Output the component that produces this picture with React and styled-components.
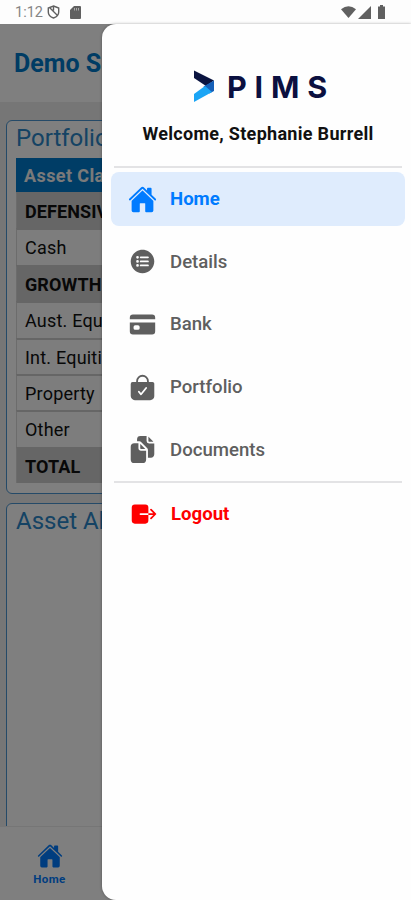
import React from "react";
import styled, { createGlobalStyle } from "styled-components";
import {
  IoHome,
  IoListCircle,
  IoCard,
  IoBagCheck,
  IoDocuments,
  IoExit,
} from "react-icons/io5";

const GlobalStyle = createGlobalStyle`
  * {
    box-sizing: border-box;
  }
  body {
    margin: 0;
    background: #fdfdfd;
    font-family: Roboto, "Liberation Sans", sans-serif;
  }
`;

const Phone = styled.div`
  display: flex;
  flex-direction: column;
  width: 411px;
  height: 900px;
  overflow: hidden;
`;

const StatusBar = styled.div`
  display: flex;
  align-items: center;
  flex: none;
  height: 24px;
  padding: 0 22px 0 15px;
  color: #858585;
  font-size: 14.5px;
`;

const StatusIcons = styled.div`
  display: flex;
  align-items: center;
  gap: ${({ $gap }) => $gap}px;
  margin-left: ${({ $push }) => ($push ? "auto" : "4px")};
  color: #606060;
`;

const Screen = styled.div`
  position: relative;
  display: flex;
  flex-direction: column;
  flex: 1;
  min-height: 0;
  background: #ececec;
`;

const Header = styled.header`
  flex: none;
  height: 78px;
  padding: 0 14px;
  background: #fefefe;
  color: #0078c8;
  font-size: 25px;
  font-weight: 700;
  line-height: 79px;
  white-space: nowrap;
`;

const Content = styled.main`
  display: flex;
  flex-direction: column;
  flex: 1;
  gap: 9px;
  min-height: 0;
  padding: 18px 6px 0;
  overflow: hidden;
`;

const Card = styled.section`
  flex: none;
  height: ${({ $height }) => $height}px;
  padding: 0 8px 0 9px;
  border: 1.5px solid #4a94d0;
  border-radius: 6px;
  background: #fefefe;
`;

const CardTitle = styled.h2`
  margin: 0;
  height: 37px;
  color: #2a86c8;
  font-size: 24px;
  font-weight: 400;
  line-height: 35px;
  white-space: nowrap;
`;

const TableHead = styled.div`
  height: 34px;
  padding-left: 8px;
  background: #007acc;
  color: #f4f4f4;
  font-size: 18px;
  font-weight: 700;
  letter-spacing: 0.4px;
  line-height: 35px;
`;

const TableRow = styled.div`
  height: 36.4px;
  padding-left: 8px;
  border-top: 2px solid #cdcdcd;
  border-left: 1px solid #d8d8d8;
  background: ${({ $group }) => ($group ? "#cdcdcd" : "#fafafa")};
  color: #101010;
  font-size: 18px;
  font-weight: ${({ $group }) => ($group ? 700 : 400)};
  letter-spacing: ${({ $group }) => ($group ? "0.1px" : "0.2px")};
  line-height: 36px;
`;

const TabBar = styled.nav`
  display: flex;
  flex: none;
  height: 74px;
  border-top: 1px solid #ececec;
  background: #fefefe;
`;

const TabItem = styled.div`
  display: flex;
  flex-direction: column;
  align-items: center;
  gap: 3px;
  width: 99px;
  padding-top: 16px;
  color: #007bff;
  font-size: 11.5px;
  font-weight: 700;
  letter-spacing: 0.4px;
`;

const Backdrop = styled.div`
  position: absolute;
  inset: 0;
  background: rgba(0, 0, 0, 0.5);
`;

const Drawer = styled.aside`
  position: absolute;
  top: 0;
  right: 0;
  bottom: 0;
  display: flex;
  flex-direction: column;
  width: 309px;
  padding: 45px 6px 0 9px;
  border-radius: 14px 0 0 14px;
  background: #fefefe;
  box-shadow: 0 0 3px rgba(0, 0, 0, 0.35);
`;

const Brand = styled.div`
  display: flex;
  align-items: center;
  align-self: flex-start;
  height: 34px;
  margin-left: 82px;
`;

const BrandName = styled.span`
  display: flex;
  margin: 1px 0 0 12px;
  color: #0b1040;
  font-family: Inter, sans-serif;
  font-size: 30.5px;
  font-weight: 700;
  letter-spacing: 7.8px;
`;

const Welcome = styled.div`
  margin-top: 11px;
  color: #111;
  font-size: 18px;
  font-weight: 700;
  letter-spacing: 0.3px;
  line-height: 40px;
  text-align: center;
  white-space: nowrap;
`;

const Divider = styled.div`
  flex: none;
  height: 2px;
  margin: 0 3px;
  background: #e3e3e5;
`;

const MenuItem = styled.div`
  display: flex;
  align-items: center;
  gap: 13px;
  height: 54px;
  padding-left: 17px;
  border-radius: 8px;
  background: ${({ $active }) => ($active ? "#dfecfd" : "transparent")};
  color: ${({ $color = "#5f5f5f" }) => $color};
  font-size: 18.6px;
  font-weight: ${({ $bold }) => ($bold ? 700 : 500)};
`;

const LogoutItem = styled(MenuItem)`
  margin-top: 4px;
  padding-left: 19px;
`;

const MenuList = styled.div`
  display: flex;
  flex-direction: column;
  gap: 8.7px;
  margin: 4px 0 0;
  height: 309px;
`;

const DrawerHead = styled.div`
  display: flex;
  flex-direction: column;
  height: 97px;
`;

const menu = [
  { label: "Home", Icon: IoHome, active: true },
  { label: "Details", Icon: IoListCircle },
  { label: "Bank", Icon: IoCard },
  { label: "Portfolio", Icon: IoBagCheck },
  { label: "Documents", Icon: IoDocuments },
];

const rows = [
  { label: "DEFENSIVE", group: true },
  { label: "Cash" },
  { label: "GROWTH", group: true },
  { label: "Aust. Equities" },
  { label: "Int. Equities" },
  { label: "Property" },
  { label: "Other" },
  { label: "TOTAL", group: true },
];

function Logo() {
  return (
    <svg width="22" height="34" viewBox="0 0 22 34">
      <path d="M1 1.500 21 11.500 13 17 1 9z" fill="#0a1440" />
      <path d="M21 11.500V22l-4.500 2.500-6-7z" fill="#1660b8" />
      <path d="M1 25 12 17l7 6L1 33z" fill="#1ba5f5" />
    </svg>
  );
}

function Status() {
  return (
    <StatusBar>
      1:12
      <StatusIcons $gap={10}>
        <svg width="13" height="14" viewBox="0 0 13 14" fill="none" stroke="currentColor" strokeWidth="1.4">
          <path d="M6.500 1 11.700 3v4c0 3-2.200 5-5.200 6-3-1-5.200-3-5.200-6V3z" />
          <path d="m3 3 7.500 7.500M6.500 1v4.500" />
        </svg>
        <svg width="11" height="13" viewBox="0 0 11 13">
          <path d="M4 0h6q1 0 1 1v11q0 1-1 1H1q-1 0-1-1V4z" fill="currentColor" />
          <path d="M4.500 2v2.500M6.500 2v2.500M8.500 2v2.500" stroke="#aaa" />
        </svg>
      </StatusIcons>
      <StatusIcons $gap={2} $push>
        <svg width="15" height="12" viewBox="0 0 15 12">
          <path d="M0 3.300Q7.500-2.800 15 3.300L7.500 12z" fill="currentColor" />
        </svg>
        <svg width="13" height="13" viewBox="0 0 13 13">
          <path d="M13 0v13H0z" fill="currentColor" />
        </svg>
        <svg width="16" height="14" viewBox="0 0 16 14">
          <path d="M5 1.500h2V0h3v1.500h2V14H5z" fill="currentColor" />
        </svg>
      </StatusIcons>
    </StatusBar>
  );
}

function App() {
  return (
    <>
      <GlobalStyle />
      <Phone>
        <Status />
        <Screen>
          <Header>Demo Super</Header>
          <Content>
            <Card $height={374}>
              <CardTitle>Portfolio</CardTitle>
              <TableHead>Asset Class</TableHead>
              {rows.map(({ label, group }) => (
                <TableRow key={label} $group={group}>
                  {label}
                </TableRow>
              ))}
            </Card>
            <Card $height={400}>
              <CardTitle>Asset Allocation</CardTitle>
            </Card>
          </Content>
          <TabBar>
            <TabItem>
              <IoHome size={26} />
              Home
            </TabItem>
          </TabBar>
          <Backdrop />
          <Drawer>
            <DrawerHead>
              <Brand>
                <Logo />
                <BrandName>PIMS</BrandName>
              </Brand>
              <Welcome>Welcome, Stephanie Burrell</Welcome>
            </DrawerHead>
            <Divider />
            <MenuList>
              {menu.map(({ label, Icon, active }) => (
                <MenuItem
                  key={label}
                  $active={active}
                  $bold={active}
                  $color={active ? "#007bff" : undefined}
                >
                  <Icon size={29} />
                  {label}
                </MenuItem>
              ))}
            </MenuList>
            <Divider />
            <LogoutItem $bold $color="#fe0000">
              <IoExit size={28} />
              Logout
            </LogoutItem>
          </Drawer>
        </Screen>
      </Phone>
    </>
  );
}

export default App;
